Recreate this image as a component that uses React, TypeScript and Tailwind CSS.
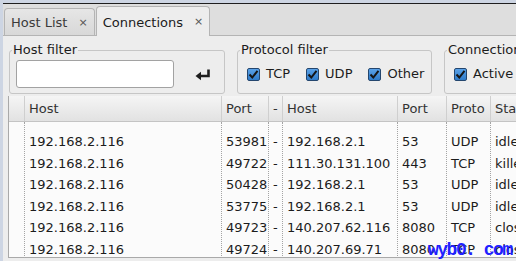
import React from "react";

const ROWS = [
  { lport: "53981", rhost: "192.168.2.1", rport: "53", proto: "UDP", state: "idle" },
  { lport: "49722", rhost: "111.30.131.100", rport: "443", proto: "TCP", state: "killed" },
  { lport: "50428", rhost: "192.168.2.1", rport: "53", proto: "UDP", state: "idle" },
  { lport: "53775", rhost: "192.168.2.1", rport: "53", proto: "UDP", state: "idle" },
  { lport: "49723", rhost: "140.207.62.116", rport: "8080", proto: "TCP", state: "closed" },
  { lport: "49724", rhost: "140.207.69.71", rport: "8080", proto: "TCP", state: "closed" },
];

type Row = (typeof ROWS)[0];

const COLS = [
  { label: "", w: "w-[16px]", get: () => "" },
  { label: "Host", w: "w-[197px]", get: () => "192.168.2.116" },
  { label: "Port", w: "w-[47px]", get: (r: Row) => r.lport },
  { label: "-", w: "w-[14px]", get: () => "-" },
  { label: "Host", w: "w-[115px]", get: (r: Row) => r.rhost },
  { label: "Port", w: "w-[49px]", get: (r: Row) => r.rport },
  { label: "Proto", w: "w-[44px]", get: (r: Row) => r.proto },
  { label: "State", w: "w-[90px]", get: (r: Row) => r.state },
];

function Check({ label }: { label: string }) {
  return (
    <label className="flex items-center gap-[6px] flex-shrink-0">
      <span className="w-[13px] h-[13px] rounded-[2px] border border-[#24466e] bg-gradient-to-b from-[#5aa2e8] to-[#2f7bc9] flex items-center justify-center">
        <svg width="11" height="11" viewBox="0 0 11 11">
          <path d="M1.5 5.5 L4.3 8.5 L9.5 1.8" fill="none" stroke="#151515" strokeWidth="2" />
        </svg>
      </span>
      <span>{label}</span>
    </label>
  );
}

function Tab({ label, active }: { label: string; active?: boolean }) {
  return (
    <div
      className={`flex items-center gap-[11px] px-[6px] border border-b-0 border-[#b4b4b4] rounded-t-[4px] ${
        active ? "h-[30px] pt-[2px] bg-[#ededed] -mb-px" : "h-[27px] pt-[2px] bg-gradient-to-b from-[#e6e6e6] to-[#d8d8d8] text-[#3a3a3a]"
      }`}
    >
      <span>{label}</span>
      <span className="text-[11px] text-[#555]">×</span>
    </div>
  );
}

export default function App() {
  return (
    <div className="w-[516px] h-[261px] overflow-hidden bg-[#cdd5e3] pl-[3px] pt-[3px] relative font-['DejaVu_Sans',sans-serif] text-[13px] text-[#1c1c1c]">
      <div className="h-full border-t border-[#1e1e1e] bg-[#ededed] flex flex-col">
        {/* tabs */}
        <div className="h-[32px] flex-shrink-0 bg-[#dedede] border-b border-[#b4b4b4] flex items-end gap-px pl-px">
          <Tab label="Host List" />
          <Tab label="Connections" active />
        </div>

        <div className="flex-1 flex flex-col pl-[5px] pt-[7px] min-h-0">
          {/* filters */}
          <div className="flex gap-[12px] h-[51px] flex-shrink-0 pl-px">
            <fieldset className="w-[216px] flex-shrink-0 border border-[#c6c6c6] rounded-[3px] flex items-center pl-[6px] pb-[2px]">
              <legend className="-ml-[4px] px-px leading-[14px]">Host filter</legend>
              <div className="w-[158px] h-[28px] bg-white border border-[#a2a2a2] rounded-[3px]" />
              <svg width="16" height="12" viewBox="0 0 16 12" className="ml-[21px] mt-[1px]">
                <path d="M13.5 0.5 V7 H5" fill="none" stroke="#1e1e1e" strokeWidth="2.6" />
                <path d="M0.5 7 L6 2.8 L6 11.2 Z" fill="#1e1e1e" />
              </svg>
            </fieldset>
            <fieldset className="w-[195px] flex-shrink-0 border border-[#c6c6c6] rounded-[3px] flex items-center gap-[16px] pl-[9px] pb-[2px]">
              <legend className="-ml-[7px] px-px leading-[14px]">Protocol filter</legend>
              <Check label="TCP" />
              <Check label="UDP" />
              <Check label="Other" />
            </fieldset>
            <fieldset className="w-[120px] flex-shrink-0 border border-[#c6c6c6] rounded-[3px] flex items-center pl-[9px] pb-[2px]">
              <legend className="-ml-[7px] px-px leading-[14px] whitespace-nowrap">Connections</legend>
              <Check label="Active" />
            </fieldset>
          </div>

          {/* table */}
          <div className="mt-[2px] h-[162px] flex-shrink-0 border-l border-b border-[#a9a9a9] bg-[#fbfbfb] flex flex-col overflow-hidden">
            <div className="h-[26px] flex-shrink-0 flex border-b border-[#c4c4c4] bg-gradient-to-b from-[#f5f5f5] to-[#e2e2e2]">
              {COLS.map((c, i) => (
                <div key={i} className={`${c.w} flex-shrink-0 border-r border-[#cfcfcf] flex items-center pl-[4px] pt-px text-[#333] whitespace-nowrap`}>
                  {c.label}
                </div>
              ))}
            </div>
            <div className="flex flex-1">
              {COLS.map((c, i) => (
                <div key={i} className={`${c.w} flex-shrink-0 border-r border-dotted border-[#a4a4a4] pt-[9px]`}>
                  {ROWS.map((r, j) => (
                    <div key={j} className="h-[21.5px] flex items-center pl-[4px] whitespace-nowrap">
                      {c.get(r)}
                    </div>
                  ))}
                </div>
              ))}
            </div>
          </div>
        </div>
      </div>

      {/* watermark */}
      <div className="absolute left-[428px] top-[241px] leading-none font-['Liberation_Mono',monospace] font-bold text-[18px] text-[#2020ff] tracking-[-1.5px]">
        wyb0. com
      </div>
    </div>
  );
}
